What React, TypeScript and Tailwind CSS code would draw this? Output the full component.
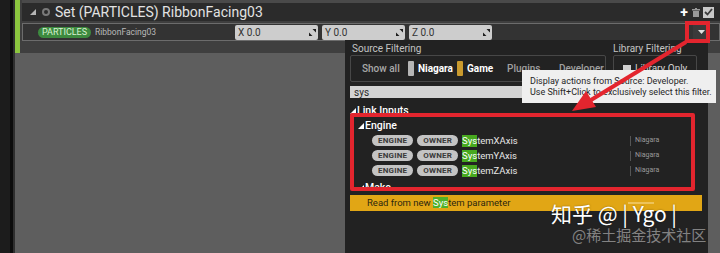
import React from "react";

function Caret({ color = "#ffffff" }: { color?: string }) {
  return (
    <svg className="mr-[1px] shrink-0" width="6" height="6" viewBox="0 0 6 6">
      <path d="M6 0 L6 6 L0 6 Z" fill={color} />
    </svg>
  );
}

function Tag({ label }: { label: string }) {
  return (
    <span className="flex h-[11px] items-center rounded-full bg-[#c4c4c4] px-[6px] text-[8px] font-bold leading-none tracking-[0.2px] text-[#3a3a3a]">
      {label}
    </span>
  );
}

function VecField({ axis }: { axis: string }) {
  return (
    <div className="flex h-[15px] w-[83px] items-center justify-between rounded-[2px] bg-[#cdcdcd] pl-[3px] pr-[2px] text-[10px] text-[#333]">
      <span>{axis} 0.0</span>
      <svg width="7" height="7" viewBox="0 0 7 7">
        <path d="M0 7 L3.5 7 L0 3.5 Z M7 0 L3.5 0 L7 3.5 Z" fill="#1e1e1e" />
      </svg>
    </div>
  );
}

function AxisRow({ axis }: { axis: string }) {
  return (
    <div className="flex h-[15px] items-center pl-[22px]">
      <Tag label="ENGINE" />
      <span className="w-[4px]" />
      <Tag label="OWNER" />
      <span className="ml-[4px] bg-[#47a91f] text-[9.5px] leading-[12px] text-white">Sys</span>
      <span className="text-[9.5px] leading-[12px] text-[#e6e6e6]">{`tem${axis}Axis`}</span>
      <span className="ml-auto mr-[48px] flex w-[30px] items-center">
        <span className="mr-[4px] h-[10px] w-px bg-[#555]" />
        <span className="text-[7px] text-[#9a9a9a]">Niagara</span>
      </span>
    </div>
  );
}

export default function App() {
  return (
    <div className="relative flex h-[253px] w-[720px] overflow-hidden bg-[#5e5e5e] font-['Roboto','Noto_Sans',sans-serif]">
      {/* left gutter */}
      <div className="flex h-full w-[15px] shrink-0">
        <div className="w-[10px] bg-[#1c1c1c]" />
        <div className="w-[3px] bg-[#0c0c0c]" />
        <div className="w-[2px] bg-[#2e2e2e]" />
      </div>

      <div className="flex flex-1 flex-col">
        {/* node section */}
        <div className="flex h-[53px] bg-[#3f3f3f]">
          <div className="w-[5px] bg-[#8cc63f]" />
          <div className="flex flex-1 flex-col pl-[2px]">
            <div className="h-[3px] bg-[#4a4a4a]" />
            <div className="flex h-[18px] items-center bg-[#2b2b2b] pl-[8px] pr-[6px]">
              <Caret color="#b5b5b5" />
              <span className="ml-[5px] h-[8px] w-[8px] rounded-full border-2 border-[#7a7a7a]" />
              <span className="ml-[5px] text-[14px] leading-none text-[#e2e2e2]">Set (PARTICLES) RibbonFacing03</span>
              <span className="ml-auto text-[14px] font-bold leading-none text-white">+</span>
              <svg className="ml-[4px]" width="8" height="9" viewBox="0 0 8 9">
                <rect x="0" y="1" width="8" height="1.5" fill="#9a9a9a" />
                <rect x="3" y="0" width="2" height="1.5" fill="#9a9a9a" />
                <rect x="1" y="3" width="6" height="6" fill="#9a9a9a" />
              </svg>
              <span className="ml-[3px] flex h-[11px] w-[11px] items-center justify-center bg-[#c9c9c9]">
                <svg width="9" height="8" viewBox="0 0 9 8">
                  <path d="M1 4 L3.5 6.5 L8 1" stroke="#3a3a3a" strokeWidth="1.8" fill="none" />
                </svg>
              </span>
            </div>
            <div className="mt-[2px] flex h-[18px] items-center border border-[#6c6c6c] bg-[#333] pl-[15px] pr-[9px]">
              <span className="flex h-[11px] w-[53px] items-center justify-center rounded-full bg-[#3d8a3f] text-[9px] leading-none text-[#d6f2d2]">
                PARTICLES
              </span>
              <span className="ml-[4px] w-[140px] whitespace-nowrap text-[8.5px] text-[#b8b8b8]">RibbonFacing03</span>
              <div className="flex gap-[4px]">
                <VecField axis="X" />
                <VecField axis="Y" />
                <VecField axis="Z" />
              </div>
              <span className="ml-auto flex h-[15px] w-[17px] items-center justify-center bg-[#3a3a3a]">
                <svg width="7" height="4" viewBox="0 0 7 4">
                  <path d="M0 0 L7 0 L3.5 4 Z" fill="#e0e0e0" />
                </svg>
              </span>
            </div>
          </div>
        </div>
        <div className="flex-1 bg-[#5e5e5e]" />
      </div>

      {/* dropdown menu */}
      <div className="absolute left-[345px] top-[40px] flex h-[213px] w-[363px] flex-col bg-[#222] pl-[5px] pt-[1px] text-[10px]">
        <div className="flex h-[14px] items-center gap-[7px] whitespace-nowrap text-[#c4c4c4]">
          <span className="w-[256px] pl-[2px]">Source Filtering</span>
          <span>Library Filtering</span>
        </div>
        <div className="flex h-[27px] gap-[7px] whitespace-nowrap">
          <div className="flex w-[256px] items-center rounded-[2px] border border-[#474747] pl-[11px] font-medium">
            <span className="w-[46px] text-[#a8a8a8]">Show all</span>
            <span className="h-[15px] w-[6px] rounded-[1px] bg-[#b5b5b5]" />
            <span className="ml-[4px] w-[35px] font-bold text-white">Niagara</span>
            <span className="ml-[4px] h-[15px] w-[6px] rounded-[1px] bg-[#c99a2e]" />
            <span className="ml-[4px] w-[40px] font-bold text-white">Game</span>
            <span className="w-[52px] text-[#a0a0a0]">Plugins</span>
            <span className="text-[#a0a0a0]">Developer</span>
          </div>
          <div className="flex w-[84px] items-center rounded-[2px] border border-[#474747] pl-[9px]">
            <span className="h-[8px] w-[8px] bg-[#cfcfcf]" />
            <span className="ml-[4px] text-[#d0d0d0]">Library Only</span>
          </div>
        </div>
        <div className="mr-[4px] mt-[4px] flex h-[12px] items-center bg-[#d3d3d3] pl-[4px] text-[10px] text-[#2a2a2a]">
          sys
        </div>
        <div className="mt-[5px] flex h-[15px] items-center text-[10.5px] text-white">
          <Caret />
          <span className="font-medium">Link Inputs</span>
        </div>
        <div className="flex h-[15px] items-center pl-[8px] text-[10.5px] text-white">
          <Caret />
          <span className="font-medium">Engine</span>
        </div>
        <AxisRow axis="X" />
        <AxisRow axis="Y" />
        <AxisRow axis="Z" />
        <div className="mt-[3px] flex h-[14px] items-center pl-[8px] text-[10.5px] text-white">
          <Caret />
          <span className="font-medium">Make</span>
        </div>
        <div className="mr-[6px] flex h-[16px] items-center bg-[#e1a615] pl-[17px] text-[9.5px] text-[#2c2610]">
          <span className="whitespace-pre">
            Read from new <span className="bg-[#4fb128] text-white">Sys</span>tem parameter
          </span>
          <span className="ml-auto mr-[48px] h-[2px] w-[26px] bg-[#edc35a]" />
        </div>
      </div>

      {/* red annotation boxes */}
      <div className="pointer-events-none absolute left-[350px] top-[113px] h-[78px] w-[345px] rounded-[2px] border-4 border-[#e3252e]" />
      <div className="pointer-events-none absolute left-[685px] top-[21px] h-[22px] w-[25px] border-4 border-[#e3252e]" />

      {/* tooltip */}
      <div className="absolute left-[522px] top-[70px] flex h-[33px] w-[194px] flex-col justify-center whitespace-nowrap bg-[#efefef] pl-[8px] text-[9px] leading-[11px] text-[#262626]">
        <span>Display actions from Source: Developer.</span>
        <span>Use Shift+Click to exclusively select this filter.</span>
      </div>

      {/* red arrow */}
      <svg className="pointer-events-none absolute left-0 top-0" width="720" height="253" viewBox="0 0 720 253">
        <line x1="686" y1="42" x2="591" y2="100" stroke="#e3252e" strokeWidth="4" />
        <polygon points="572,111 596,107 586,91" fill="#e3252e" />
      </svg>

      {/* watermark */}
      <div className="pointer-events-none absolute left-[551px] top-[201px] flex flex-col items-start whitespace-nowrap font-['Noto_Sans_CJK_SC','Noto_Sans',sans-serif]">
        <span className="text-[21px] leading-[24px] text-white [text-shadow:0_0_2px_rgba(0,0,0,0.4)]">知乎 @ | Ygo |</span>
        <span className="ml-[21px] mt-[1px] text-[15px] leading-[17px] text-[rgba(255,255,255,0.45)]">@稀土掘金技术社区</span>
      </div>
    </div>
  );
}
